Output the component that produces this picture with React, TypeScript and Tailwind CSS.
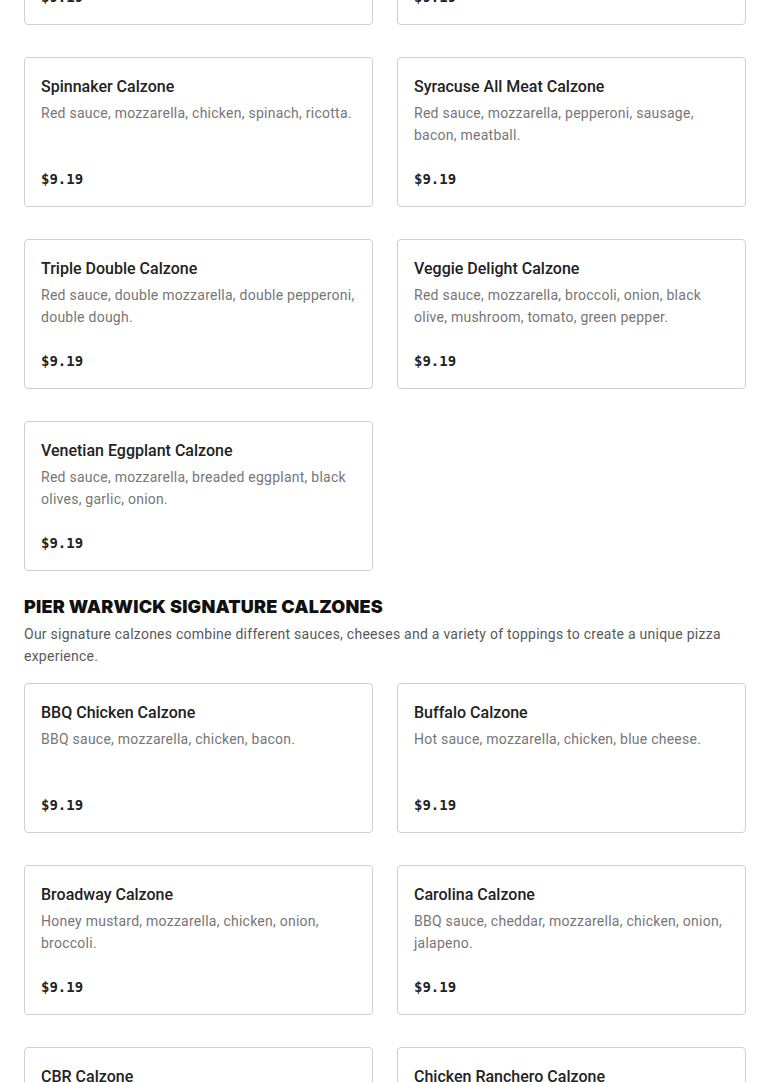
type Item = { name: string; desc: string; price: string };

const topItems: Item[] = [
  { name: "Pepperoni Calzone", desc: "Red sauce, mozzarella, pepperoni.", price: "$9.19" },
  { name: "Sausage Calzone", desc: "Red sauce, mozzarella, sausage.", price: "$9.19" },
  { name: "Spinnaker Calzone", desc: "Red sauce, mozzarella, chicken, spinach, ricotta.", price: "$9.19" },
  { name: "Syracuse All Meat Calzone", desc: "Red sauce, mozzarella, pepperoni, sausage, bacon, meatball.", price: "$9.19" },
  { name: "Triple Double Calzone", desc: "Red sauce, double mozzarella, double pepperoni, double dough.", price: "$9.19" },
  { name: "Veggie Delight Calzone", desc: "Red sauce, mozzarella, broccoli, onion, black olive, mushroom, tomato, green pepper.", price: "$9.19" },
  { name: "Venetian Eggplant Calzone", desc: "Red sauce, mozzarella, breaded eggplant, black olives, garlic, onion.", price: "$9.19" },
];

const signature: Item[] = [
  { name: "BBQ Chicken Calzone", desc: "BBQ sauce, mozzarella, chicken, bacon.", price: "$9.19" },
  { name: "Buffalo Calzone", desc: "Hot sauce, mozzarella, chicken, blue cheese.", price: "$9.19" },
  { name: "Broadway Calzone", desc: "Honey mustard, mozzarella, chicken, onion, broccoli.", price: "$9.19" },
  { name: "Carolina Calzone", desc: "BBQ sauce, cheddar, mozzarella, chicken, onion, jalapeno.", price: "$9.19" },
  { name: "CBR Calzone", desc: "Ranch, mozzarella, chicken, bacon.", price: "$9.19" },
  { name: "Chicken Ranchero Calzone", desc: "Salsa, mozzarella, chicken, onion, jalapeno.", price: "$9.19" },
];

const Card = ({ item }: { item: Item }) => (
  <div className="flex h-[150px] flex-col rounded border border-[#cfcfcf] bg-white p-4">
    <h3 className="text-[16px] leading-[26px] font-medium text-[#222]">{item.name}</h3>
    <p className="mt-[2px] flex-1 text-[14px] leading-[22px] tracking-[0.25px] text-[#767676]">{item.desc}</p>
    <span className="font-['DejaVu_Sans_Mono',monospace] text-[14px] leading-[22px] font-bold text-[#222]">
      {item.price}
    </span>
  </div>
);

export default function App() {
  return (
    <div className="min-h-screen overflow-hidden bg-white px-6 font-['Roboto',sans-serif]">
      <div className="-mt-[125px] grid grid-cols-2 gap-x-6 gap-y-8">
        {topItems.map((it) => (
          <Card key={it.name} item={it} />
        ))}
      </div>

      <h2 className="mt-6 font-['Inter',sans-serif] text-[18px] leading-6 font-black tracking-[0.2px] text-[#111]">
        PIER WARWICK SIGNATURE CALZONES
      </h2>
      <p className="mt-1 text-[14px] leading-[22px] tracking-[0.25px] text-[#595959]">
        Our signature calzones combine different sauces, cheeses and a variety of toppings to create a unique pizza
        experience.
      </p>

      <div className="mt-4 grid grid-cols-2 gap-x-6 gap-y-8 pb-10">
        {signature.map((it) => (
          <Card key={it.name} item={it} />
        ))}
      </div>
    </div>
  );
}
